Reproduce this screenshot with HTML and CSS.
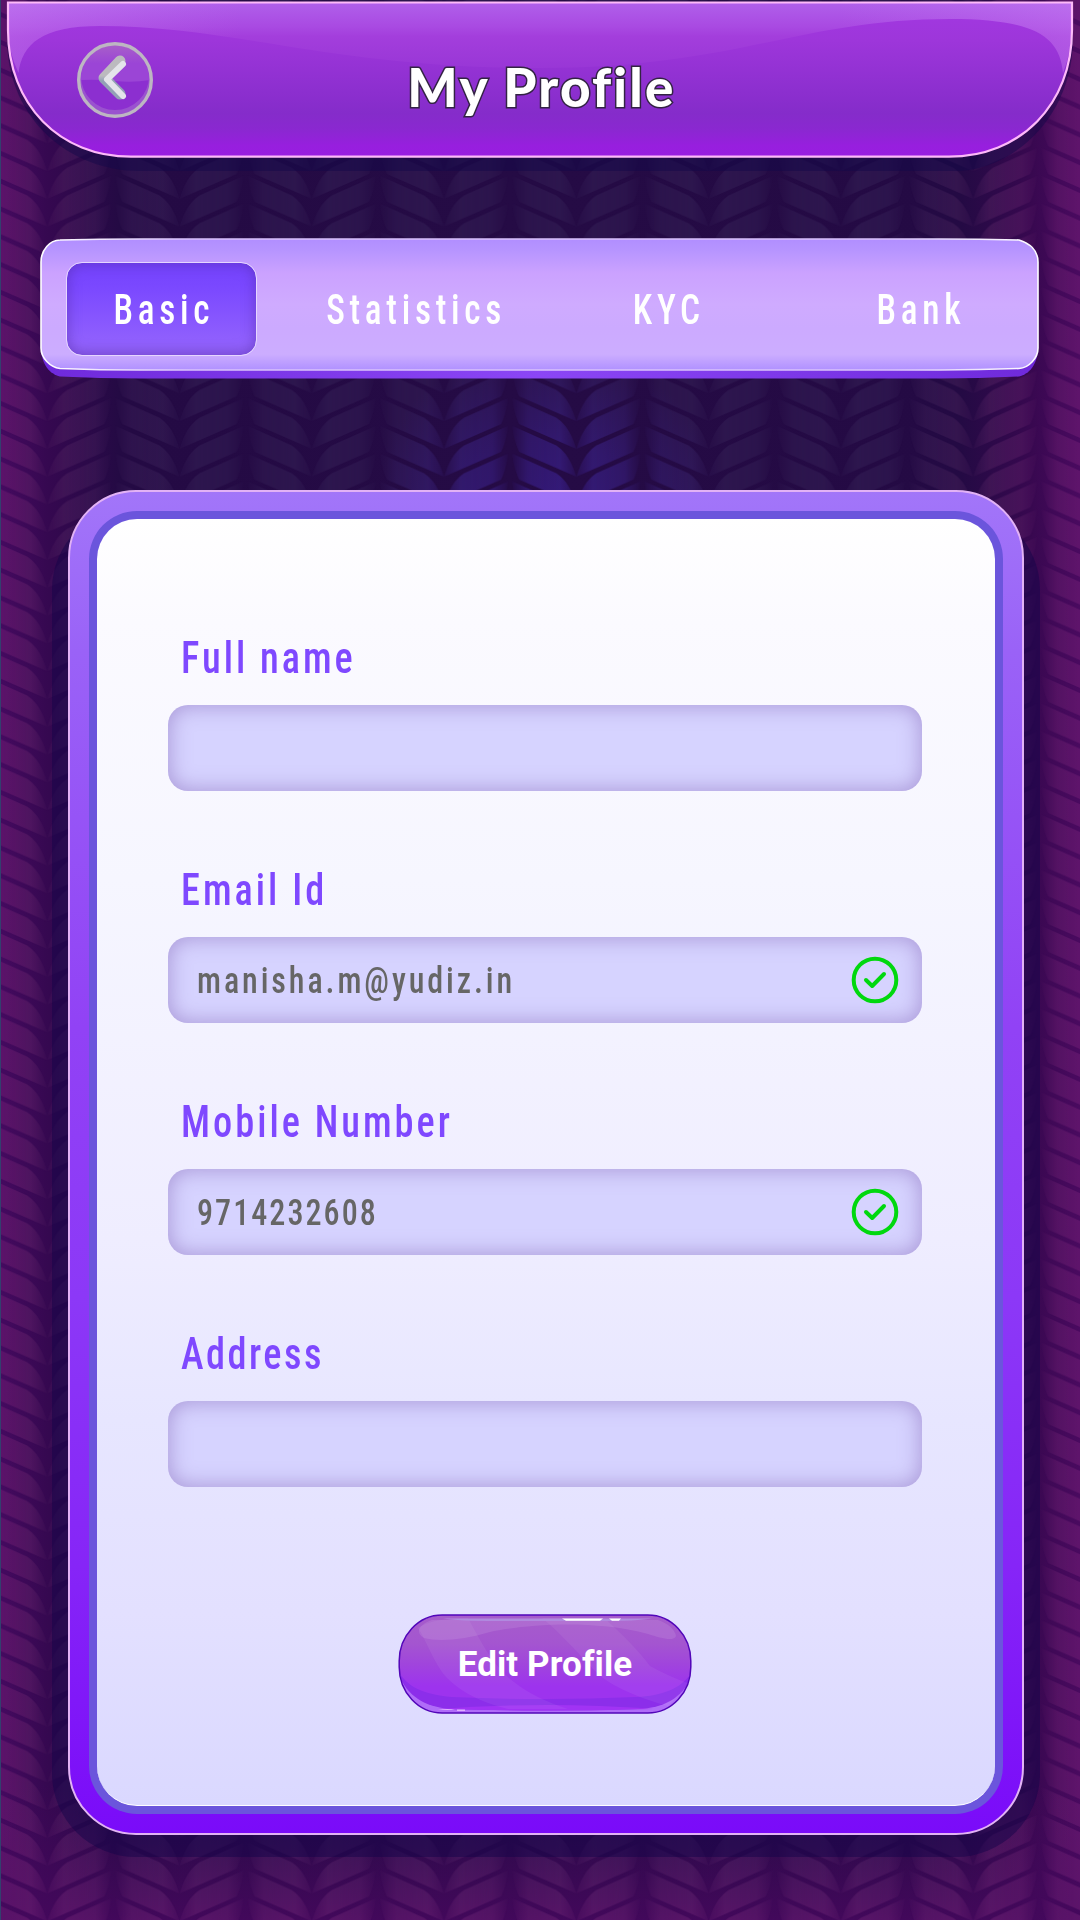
FILE: index.html
```html
<!DOCTYPE html>
<html lang="en">
<head>
<meta charset="utf-8">
<title>My Profile</title>
<link rel="stylesheet" href="styles.css">
</head>
<body>
<svg class="backdrop" viewBox="0 0 1080 1920" aria-hidden="true">
  <defs>
    <linearGradient id="base" x1="0" x2="1" y1="0" y2="0">
      <stop offset="0" stop-color="#450a60"/><stop offset=".045" stop-color="#350850"/>
      <stop offset=".11" stop-color="#240a44"/><stop offset=".5" stop-color="#250b45"/>
      <stop offset=".89" stop-color="#240a44"/><stop offset=".955" stop-color="#380850"/>
      <stop offset="1" stop-color="#4a0a60"/>
    </linearGradient>
    <linearGradient id="leafTone" x1="0" x2="1" y1="0" y2="0">
      <stop offset="0" stop-color="#60156c"/><stop offset=".045" stop-color="#431458"/>
      <stop offset=".11" stop-color="#31154f"/><stop offset=".18" stop-color="#2d164e"/>
      <stop offset=".82" stop-color="#2d164e"/><stop offset=".89" stop-color="#35154f"/>
      <stop offset=".955" stop-color="#4d145d"/><stop offset="1" stop-color="#60156c"/>
    </linearGradient>
    <linearGradient id="lowBase" x1="0" x2="0" y1="0" y2="1">
      <stop offset=".93" stop-color="#44085c" stop-opacity="0"/><stop offset="1" stop-color="#44085c" stop-opacity=".95"/>
    </linearGradient>
    <linearGradient id="lowLeaf" x1="0" x2="0" y1="0" y2="1">
      <stop offset=".93" stop-color="#5c156a" stop-opacity="0"/><stop offset="1" stop-color="#5c156a" stop-opacity=".9"/>
    </linearGradient>
    <radialGradient id="glow" gradientUnits="userSpaceOnUse" cx="546" cy="530" r="185">
      <stop offset="0" stop-color="#351a80"/><stop offset=".5" stop-color="#341a78" stop-opacity=".75"/><stop offset="1" stop-color="#341a78" stop-opacity="0"/>
    </radialGradient>
    <linearGradient id="leafR" x1="0" x2="1" y1="0" y2="0">
      <stop offset="0" stop-color="#fff" stop-opacity=".1"/><stop offset=".25" stop-color="#fff" stop-opacity=".85"/>
      <stop offset=".75" stop-color="#fff"/><stop offset="1" stop-color="#fff" stop-opacity=".3"/>
    </linearGradient>
    <pattern id="weave" patternUnits="userSpaceOnUse" x="-18.9" y="4.4" width="132.27" height="27.78">
      <g id="leaf">
        <path id="r" fill="url(#leafR)" d="M2 -23 L46 -3.500 C56 3 62 14 66 27.8 L9 3 C6 -3 3 -13 2 -23Z"/>
        <use href="#r" transform="translate(132.27 0) scale(-1 1)"/>
      </g>
      <use href="#leaf" y="27.78"/>
    </pattern>
    <mask id="weaveMask" maskUnits="userSpaceOnUse" x="0" y="0" width="1080" height="1920">
      <rect width="1080" height="1920" fill="url(#weave)"/>
    </mask>
  </defs>
  <rect width="1080" height="1920" fill="url(#base)"/>
  <rect width="1080" height="1920" fill="url(#lowBase)"/>
  <g mask="url(#weaveMask)">
    <rect width="1080" height="1920" fill="url(#leafTone)"/>
    <rect width="1080" height="1920" fill="url(#lowLeaf)"/>
    <rect width="1080" height="1920" fill="url(#glow)"/>
  </g>
  <rect width="1" height="1920" fill="#33406e"/>
</svg>

<header class="header">
  <svg class="header-shape" viewBox="0 0 1080 180" aria-hidden="true">
    <defs>
      <linearGradient id="hd" x1="0" x2="0" y1="0" y2="1">
        <stop offset="0" stop-color="#a338e2"/><stop offset=".25" stop-color="#9d36da"/><stop offset=".72" stop-color="#852cca"/>
        <stop offset=".82" stop-color="#8a28d0"/><stop offset=".93" stop-color="#971fde"/><stop offset="1" stop-color="#981de0"/>
      </linearGradient>
      <linearGradient id="gloss" gradientUnits="userSpaceOnUse" x1="0" x2="0" y1="3" y2="70">
        <stop offset="0" stop-color="#b05fea"/><stop offset=".35" stop-color="#a94ae2"/><stop offset=".5" stop-color="#a33edc"/><stop offset="1" stop-color="#9836d6"/>
      </linearGradient>
      <linearGradient id="glossSide" x1="0" x2="1" y1="0" y2="0">
        <stop offset="0" stop-color="#d490f8" stop-opacity=".32"/><stop offset=".22" stop-color="#c880f6" stop-opacity="0"/>
        <stop offset=".78" stop-color="#c880f6" stop-opacity="0"/><stop offset="1" stop-color="#d490f8" stop-opacity=".32"/>
      </linearGradient>
      <path id="lip" d="M8.5 3 H1071.5 L1071.5 30 Q1071.5 52 1063 73 C1060 34 1030 19 950 19 C800 19 735 68 540 68 C330 68 235 26 100 26 C42 26 22 44 18.500 73 Q8.500 52 8.500 30Z"/>
    </defs>
    <path fill="#12084a" fill-opacity=".48" d="M7 2 H1073 V40 C1072 120 1010 171 955 171 H140 C70 171 8 120 7 40Z"/>
    <path fill="url(#hd)" d="M8 2.500 H1072 V30 C1072 105 1020 156.500 949 156.500 H131 C60 156.500 8 105 8 30Z"/>
    <use href="#lip" fill="url(#gloss)"/>
    <use href="#lip" fill="url(#glossSide)"/>
    <path fill="none" stroke="#fdb9f9" stroke-width="2.200" d="M8 2.500 H1072 V30 C1072 105 1020 156.700 949 156.700 H131 C60 156.700 8 105 8 30Z"/>
  </svg>
  <button class="back" aria-label="Back">
    <svg viewBox="0 0 76 76" aria-hidden="true">
      <defs>
        <linearGradient id="orb" x1="0" x2="0" y1="0" y2="1">
          <stop offset="0" stop-color="#a85fc9"/><stop offset=".5" stop-color="#9b45d6"/>
        </linearGradient>
        <linearGradient id="arrowBack" x1="0" x2="0" y1="0" y2="1">
          <stop offset=".45" stop-color="#bcbabf"/><stop offset=".6" stop-color="#93a0b6"/>
        </linearGradient>
      </defs>
      <circle cx="38" cy="38" r="35" fill="#9a52cf"/>
      <circle cx="38" cy="34" r="34" fill="#8c2fd0"/>
      <path d="M3 38 A35 35 0 0 1 73 38 Q56 41 38 39 Q20 37 3 38Z" fill="url(#orb)"/>
      <circle cx="38" cy="38" r="36.300" fill="none" stroke="#bdb6c2" stroke-width="3.400"/>
      <path d="M43 19 L27 36 L43 52" fill="none" stroke="url(#arrowBack)" stroke-width="11" stroke-linecap="round" stroke-linejoin="round"/>
      <path d="M46 22 L30 37.500 L46 54" fill="none" stroke="#e4e4ea" stroke-width="6" stroke-linecap="round" stroke-linejoin="round"/>
    </svg>
  </button>
  <h1 class="title">My Profile</h1>
</header>

<nav class="tabs">
  <svg class="tabs-shape" viewBox="0 0 999 142" aria-hidden="true">
    <defs>
      <linearGradient id="bar" x1="0" x2="0" y1="0" y2="1">
        <stop offset="0" stop-color="#b18eff"/><stop offset=".09" stop-color="#b795ff"/><stop offset=".26" stop-color="#cba2ff"/>
        <stop offset=".5" stop-color="#cfabff"/><stop offset=".68" stop-color="#ccaaff"/><stop offset=".88" stop-color="#ccadff"/><stop offset="1" stop-color="#b091ff"/>
      </linearGradient>
      <linearGradient id="barBase" x1="0" x2="1" y1="0" y2="0">
        <stop offset="0" stop-color="#6f2adb"/><stop offset=".5" stop-color="#8b46f5"/><stop offset="1" stop-color="#6f2adb"/>
      </linearGradient>
      <linearGradient id="barEdge" x1="0" x2="1" y1="0" y2="0">
        <stop offset="0" stop-color="#fff"/><stop offset=".15" stop-color="#d9c2fb"/><stop offset=".85" stop-color="#d9c2fb"/><stop offset="1" stop-color="#fff"/>
      </linearGradient>
    </defs>
    <path fill="url(#barBase)" d="M1 108 C1 127 10 136 20 138.500 Q60 140.500 100 140.500 H899 Q940 140.500 979 138.500 C989 136 998 127 998 108Z"/>
    <path fill="url(#bar)" stroke="url(#barEdge)" stroke-width="1.600" d="M1 24 C1 12 10 2 20 2 Q60 1 100 1 H899 Q940 1 979 2 C989 5 998 12 998 24 V110 C998 120 989 130 979 130.500 Q940 132 899 132 H100 Q60 132 20 130.500 C10 129 1 120 1 110Z"/>
  </svg>
  <a class="tab active"><span class="narrow">Basic</span></a>
  <a class="tab"><span class="narrow">Statistics</span></a>
  <a class="tab"><span class="narrow">KYC</span></a>
  <a class="tab"><span class="narrow">Bank</span></a>
</nav>

<main class="frame">
  <div class="band">
    <form class="panel">
      <div class="group">
        <label class="label"><span class="narrow">Full name</span></label>
        <div class="field"></div>
      </div>
      <div class="group">
        <label class="label"><span class="narrow">Email Id</span></label>
        <div class="field">
          <span class="narrow value">manisha.m@yudiz.in</span>
          <svg class="check" viewBox="0 0 48 48" aria-hidden="true"><circle cx="24" cy="24" r="21.300"/><path d="M15 24 L21.200 30 L33 18"/></svg>
        </div>
      </div>
      <div class="group">
        <label class="label"><span class="narrow">Mobile Number</span></label>
        <div class="field">
          <span class="narrow value digits">9714232608</span>
          <svg class="check" viewBox="0 0 48 48" aria-hidden="true"><circle cx="24" cy="24" r="21.300"/><path d="M15 24 L21.200 30 L33 18"/></svg>
        </div>
      </div>
      <div class="group">
        <label class="label"><span class="narrow tight">Address</span></label>
        <div class="field"></div>
      </div>
      <button class="edit" type="button">
        <svg class="edit-shape" viewBox="0 0 294 100" aria-hidden="true">
          <defs>
            <linearGradient id="btn" x1="0" x2="0" y1="0" y2="1">
              <stop offset="0" stop-color="#a65dca"/><stop offset=".35" stop-color="#a455d0"/><stop offset=".6" stop-color="#a044dd"/><stop offset=".85" stop-color="#9d33ee"/>
            </linearGradient>
            <clipPath id="pill"><rect x="1.500" y="1.500" width="291" height="97" rx="43" ry="46"/></clipPath>
          </defs>
          <rect x="1.200" y="1" width="291.600" height="98" rx="43" ry="46" fill="#b06df8"/>
          <g clip-path="url(#pill)">
            <path fill="#8c2eea" d="M0 0 H294 V60 C286 84 266 94 240 95 Q145 98 50 95 C26 92 8 82 0 58Z"/>
            <path fill="#a133f4" d="M40 95 Q150 87 255 95 Q150 98 40 95Z"/>
            <path fill="url(#btn)" d="M0 0 H294 V58 C284 74 265 82 238 83 Q145 87 54 83 C24 80 8 72 0 56Z"/>
            <path fill="#fff" fill-opacity=".06" d="M20 14 Q34 4 70 4 C82 26 96 54 116 68 Q136 84 170 95 H110 C80 88 56 74 44 58 C32 40 28 26 20 14Z"/>
            <path fill="#fff" fill-opacity=".06" d="M144 4 H206 C224 20 240 36 252 52 Q270 62 292 70 L270 92 C240 84 214 72 200 60 C182 42 166 22 144 4Z"/>
            <path fill="#fff" fill-opacity=".1" d="M34 6 H260 Q276 12 278 22 C276 28 262 24 250 20 C190 4 120 12 92 18 C66 26 40 28 26 24 C16 18 22 10 34 6Z"/>
            <path fill="#b08adf" d="M45 4.500 H254 Q240 7 200 7 H100 Q60 7 45 4.500Z"/>
            <path fill="#fff" d="M164 4.500 H205 L202 6.800 H168Z M211 4.500 H223 L221 6.800 H214Z"/>
            <path fill="#e0b0ff" d="M40 96 Q50 94 57 96Z M59 95.500 H67 V97 H59Z"/>
          </g>
          <rect x="1.200" y="1" width="291.600" height="98" rx="43" ry="46" fill="none" stroke="#5206b8" stroke-width="1.500"/>
        </svg>
        <span class="edit-text">Edit Profile</span>
      </button>
    </form>
  </div>
</main>
</body>
</html>
```
FILE: styles.css
```css
* { box-sizing: border-box; }

body {
  margin: 0;
  width: 1080px;
  height: 1920px;
  overflow: hidden;
  background: #250b45;
  font-family: Roboto, "Liberation Sans", sans-serif;
}

.backdrop {
  position: absolute;
  top: 0;
  left: 0;
  width: 1080px;
  height: 1920px;
  z-index: -1;
}

button {
  border: 0;
  padding: 0;
  background: none;
  font: inherit;
}

/* Condensed type used for tabs, labels and values */
.narrow {
  display: inline-block;
  font-stretch: 75%;
  font-weight: 500;
  letter-spacing: 3.4px;
  margin-right: -3.4px;
  transform: scaleX(.88);
  white-space: nowrap;
}

.header {
  position: relative;
  height: 238px;
  padding: 42px 77px;
  display: grid;
  grid-template-columns: 76px 1fr 76px;
  align-items: start;
}

.header-shape {
  position: absolute;
  inset: 0 0 auto 0;
  width: 1080px;
  height: 180px;
}

.back {
  position: relative;
  width: 76px;
  height: 76px;
}

.back svg { display: block; width: 100%; height: 100%; }

.title {
  position: relative;
  margin: 0;
  padding-left: 3px;
  text-align: center;
  font-family: Lato, "Open Sans", sans-serif;
  font-weight: 900;
  font-size: 53px;
  line-height: 90px;
  letter-spacing: 2.2px;
  color: #fff;
  -webkit-text-stroke: 3px #332344;
  paint-order: stroke fill;
}

.tabs {
  position: relative;
  width: 999px;
  height: 142px;
  margin-left: 40px;
  padding: 24px 0 0 2px;
  display: grid;
  grid-template-columns: repeat(4, 252.5px);
  justify-content: center;
  align-items: start;
}

.tabs-shape {
  position: absolute;
  inset: 0;
  width: 999px;
  height: 142px;
}

.tab {
  position: relative;
  justify-self: center;
  width: 191px;
  height: 94px;
  display: flex;
  justify-content: center;
  align-items: center;
  border-radius: 16px;
  color: #fff;
  font-size: 42px;
  line-height: 98px;
}

.tab .narrow {
  letter-spacing: 5.6px;
  margin-right: -4px;
  padding-top: 1px;
  transform: scaleX(.84);
}

.tab.active {
  background: linear-gradient(#7443fc, #7a48ff 25%, #9060fd 85%, #8f60f5);
  border: 1px solid #e6d6ff;
  background-clip: padding-box;
  box-shadow: inset 0 0 14px rgba(80, 40, 160, .55);
}

.frame {
  position: relative;
  width: 956px;
  height: 1345px;
  margin: 110px 0 0 68px;
  padding: 19px;
  border: 2px solid #e2b2f5;
  border-radius: 68px;
  background: linear-gradient(#a276f9, #9a62f7 12%, #9142f5 40%, #8c38f7 60%, #8625f7 80%, #7a0bf9) border-box;
}

/* Flat drop shadow, lower and wider than the frame */
.frame::before {
  content: "";
  position: absolute;
  z-index: -1;
  inset: 14px -18px -24px -18px;
  border-radius: 84px;
  background: rgba(18, 4, 74, .48);
}

.band {
  height: 100%;
  padding: 8px;
  border-radius: 48px;
  background: #6b55dc;
}

.panel {
  height: 100%;
  padding: 109px 73px 0 71px;
  display: flex;
  flex-direction: column;
  gap: 69px;
  border-radius: 40px;
  border-bottom: 1px solid #fff;
  background: linear-gradient(#fff, #fbfaff 8%, #f6f6ff 28%, #efedff 56%, #e7e6ff 70%, #e3e0ff 85%, #dad8ff);
}

.group {
  display: flex;
  flex-direction: column;
  gap: 17px;
}

.label {
  padding-left: 13px;
  height: 60px;
  line-height: 62px;
  font-size: 43.6px;
  color: #7f48ff;
}

.label .narrow, .field .narrow { transform-origin: left center; }

.label .tight { letter-spacing: 2.8px; }

.field {
  height: 86px;
  padding: 0 23px 0 29px;
  display: flex;
  align-items: center;
  justify-content: space-between;
  border-radius: 20px;
  background: #d6d3ff;
  box-shadow: inset 0 0 20px 2px rgba(130, 100, 180, .5);
}

.value {
  padding-top: 2px;
  font-size: 36.5px;
  line-height: 86px;
  color: #666;
}

.field .value { letter-spacing: 3.3px; }
.field .digits { letter-spacing: 2.3px; }

.check {
  width: 48px;
  height: 48px;
  fill: none;
  stroke: #00d80e;
  stroke-width: 4;
  stroke-linecap: round;
  stroke-linejoin: round;
}

.edit {
  position: relative;
  align-self: center;
  width: 294px;
  height: 100px;
  margin-top: 57.5px;
}

.edit-shape {
  position: absolute;
  inset: 0;
  width: 294px;
  height: 100px;
}

.edit-text {
  position: relative;
  display: inline-block;
  font-weight: 700;
  font-size: 35px;
  line-height: 102px;
  letter-spacing: .1px;
  color: #fff;
}
```
